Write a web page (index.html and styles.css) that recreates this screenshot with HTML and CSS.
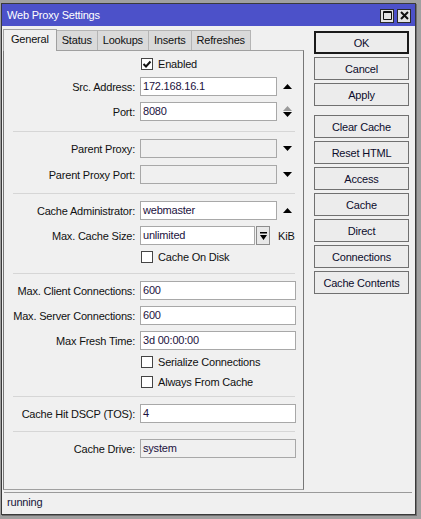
FILE: index.html
```html
<!DOCTYPE html>
<html>
  <head>
    <meta charset="utf-8">
    <title>Web Proxy Settings</title>
    <link rel="stylesheet" href="styles.css">
  </head>
  <body>
    <div class="window">
      <div class="titlebar">
        <span class="title">Web Proxy Settings</span>
        <span class="tbtn">
          <svg width="9" height="9" viewBox="0 0 9 9"><path d="M0.5 0.5h8v8h-8z M0.5 1.5h8" fill="none" stroke="#111" stroke-width="1"/></svg>
        </span>
        <span class="tbtn">
          <svg width="9" height="9" viewBox="0 0 9 9"><path d="M1 1L8 8M8 1L1 8" stroke="#111" stroke-width="2"/></svg>
        </span>
      </div>

      <div class="content">
        <div class="main">
          <div class="tabs">
            <span class="tab active">General</span>
            <span class="tab">Status</span>
            <span class="tab">Lookups</span>
            <span class="tab">Inserts</span>
            <span class="tab">Refreshes</span>
          </div>

          <div class="panel">
            <div class="group first">
              <div class="check">
                <span class="box">
                  <svg width="10" height="10" viewBox="0 0 10 10"><path d="M1.5 5l2.5 2.5 4.5-5" fill="none" stroke="#111" stroke-width="2"/></svg>
                </span>
                <span>Enabled</span>
              </div>
              <div class="row">
                <label>Src. Address:</label>
                <span class="field">172.168.16.1</span>
                <span class="spin">
                  <svg width="9" height="5" viewBox="0 0 9 5"><path d="M0 5h9L4.5 0z"/></svg>
                </span>
              </div>
              <div class="row">
                <label>Port:</label>
                <span class="field">8080</span>
                <span class="spin">
                  <svg width="9" height="5" viewBox="0 0 9 5"><path d="M0 5h9L4.5 0z" fill="#9a9a9a"/></svg>
                  <svg width="9" height="5" viewBox="0 0 9 5"><path d="M0 0h9L4.5 5z"/></svg>
                </span>
              </div>
            </div>
            <hr class="sep">

            <div class="group loose">
              <div class="row">
                <label>Parent Proxy:</label>
                <span class="field off"></span>
                <span class="spin">
                  <svg width="9" height="5" viewBox="0 0 9 5"><path d="M0 0h9L4.5 5z"/></svg>
                </span>
              </div>
              <div class="row">
                <label>Parent Proxy Port:</label>
                <span class="field off"></span>
                <span class="spin">
                  <svg width="9" height="5" viewBox="0 0 9 5"><path d="M0 0h9L4.5 5z"/></svg>
                </span>
              </div>
            </div>
            <hr class="sep">

            <div class="group">
              <div class="row">
                <label>Cache Administrator:</label>
                <span class="field">webmaster</span>
                <span class="spin">
                  <svg width="9" height="5" viewBox="0 0 9 5"><path d="M0 5h9L4.5 0z"/></svg>
                </span>
              </div>
              <div class="row">
                <label>Max. Cache Size:</label>
                <span class="field short">unlimited</span>
                <span class="drop">
                  <svg width="7" height="8" viewBox="0 0 7 8"><path d="M0 0h7v1.5H0z M0 3h7L3.5 8z"/></svg>
                </span>
                <span class="unit">KiB</span>
              </div>
              <div class="check">
                <span class="box"></span>
                <span>Cache On Disk</span>
              </div>
            </div>
            <hr class="sep">

            <div class="group checks-end">
              <div class="row">
                <label>Max. Client Connections:</label>
                <span class="field long">600</span>
              </div>
              <div class="row">
                <label>Max. Server Connections:</label>
                <span class="field long">600</span>
              </div>
              <div class="row">
                <label>Max Fresh Time:</label>
                <span class="field long">3d 00:00:00</span>
              </div>
              <div class="check">
                <span class="box"></span>
                <span>Serialize Connections</span>
              </div>
              <div class="check">
                <span class="box"></span>
                <span>Always From Cache</span>
              </div>
            </div>
            <hr class="sep">

            <div class="group single">
              <div class="row">
                <label>Cache Hit DSCP (TOS):</label>
                <span class="field long">4</span>
              </div>
            </div>
            <hr class="sep">

            <div class="group">
              <div class="row">
                <label>Cache Drive:</label>
                <span class="field long off">system</span>
              </div>
            </div>
          </div>
        </div>

        <div class="actions">
          <button class="default">OK</button>
          <button>Cancel</button>
          <button>Apply</button>
          <button class="spaced">Clear Cache</button>
          <button>Reset HTML</button>
          <button>Access</button>
          <button>Cache</button>
          <button>Direct</button>
          <button>Connections</button>
          <button>Cache Contents</button>
        </div>
      </div>

      <div class="status">running</div>
    </div>
  </body>
</html>
```

FILE: styles.css
```css
* {
  margin: 0;
  padding: 0;
  box-sizing: border-box;
}
body {
  width: 421px;
  height: 519px;
  overflow: hidden;
  background-color: #a0a0a0;
  font-family: "Liberation Sans", Arial, sans-serif;
  font-size: 11px;
  letter-spacing: -0.2px;
  color: #111;
}

/* window frame */
.window {
  display: flex;
  flex-direction: column;
  width: 415px;
  height: 512px;
  margin: 3px 0 0 1px;
  border: 1px solid #3a3a3a;
  background-color: #f0f0f0;
  box-shadow: 1px 1px 0 #707070;
}
.titlebar {
  display: flex;
  align-items: center;
  gap: 3px;
  height: 22px;
  padding: 0 4px 0 5px;
  background-color: #4c51c9;
  color: #fff;
}
.title {
  flex: 1;
}
.tbtn {
  display: flex;
  align-items: center;
  justify-content: center;
  width: 14px;
  height: 14px;
  margin-top: 1px;
  border: 1px solid #2a2a2a;
  background-color: #e4e4e4;
}

.content {
  display: flex;
  flex: 1;
  padding: 3px 0 1px 1px;
}
.main {
  display: flex;
  flex-direction: column;
  width: 301px;
}

/* tabs */
.tabs {
  display: flex;
  align-items: flex-end;
  height: 21px;
}
.tab {
  height: 20px;
  padding: 0 5px;
  line-height: 19px;
  border: 1px solid #b4b4b4;
  border-left: 0;
  border-bottom: 0;
  background-color: #dadada;
}
.tab.active {
  height: 22px;
  margin-bottom: -1px;
  padding: 0 7px;
  line-height: 18px;
  border-left: 1px solid #8a8a8a;
  border-color: #a0a0a0;
  background-color: #f0f0f0;
  position: relative;
}

.panel {
  flex: 1;
  border: 1px solid #a0a0a0;
  border-left-color: #777;
  border-right-color: #777;
}
.group {
  display: flex;
  flex-direction: column;
  gap: 6px;
  padding: 7px 0 9px;
}
.group.first {
  padding: 6px 0 10px;
}
.group.loose {
  gap: 7px;
}
.group.checks-end {
  padding-bottom: 7px;
}
.group.single {
  padding-bottom: 8px;
}
.sep {
  height: 1px;
  margin: 0 8px 0 9px;
  border: 0;
  background-color: #d6d6d6;
}

/* form rows */
.row {
  display: flex;
  align-items: center;
  height: 19px;
}
.row label {
  flex: none;
  width: 131px;
  margin-right: 5px;
  text-align: right;
}
.field {
  width: 137px;
  height: 19px;
  padding: 0 2px;
  line-height: 17px;
  border: 1px solid #a8a8a8;
  background-color: #fff;
  color: #1c1240;
  white-space: nowrap;
}
.field.long {
  width: 156px;
}
.field.short {
  width: 115px;
}
.field.off {
  background-color: #f0f0f0;
}
.spin {
  display: flex;
  flex-direction: column;
  align-items: center;
  justify-content: center;
  gap: 1px;
  width: 21px;
}
.drop {
  display: flex;
  align-items: center;
  justify-content: center;
  width: 14px;
  height: 19px;
  margin-left: 1px;
  border: 1px solid #8c8c8c;
  background-color: #e8e8e8;
}
.unit {
  margin-left: 8px;
}

.check {
  display: flex;
  align-items: center;
  gap: 5px;
  height: 14px;
  padding-left: 137px;
}
.row + .check {
  margin-top: -1px;
}
.box {
  display: flex;
  align-items: center;
  justify-content: center;
  width: 12px;
  height: 12px;
  border: 1px solid #444;
  background-color: #fff;
}

/* buttons on the right */
.actions {
  display: flex;
  flex-direction: column;
  gap: 3px;
  width: 95px;
  margin: 2px 0 0 10px;
}
.actions button {
  height: 23px;
  border: 1px solid #707070;
  background-color: #ececec;
  font: inherit;
  letter-spacing: -0.2px;
  color: #0c0c2c;
}
.actions button.default {
  border: 2px solid #1a1a1a;
}
.actions button.spaced {
  margin-top: 6px;
}

.status {
  height: 20px;
  margin: 1px 3px 2px 2px;
  padding-left: 3px;
  line-height: 19px;
  border-top: 1px solid #9a9a9a;
  color: #141438;
}
```
